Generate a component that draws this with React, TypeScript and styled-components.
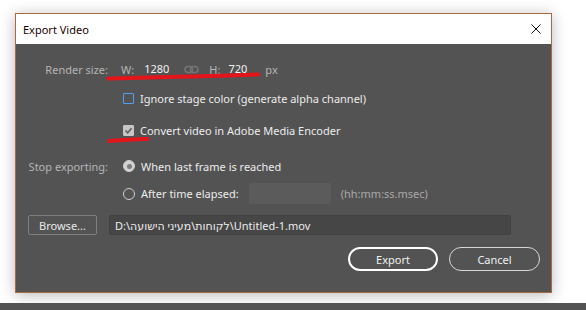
import React from 'react'
import styled, { createGlobalStyle } from 'styled-components'

const GlobalStyle = createGlobalStyle`
  html, body {
    margin: 0;
    background: #ffffff;
  }
  body {
    font-family: "Noto Sans", "DejaVu Sans", sans-serif;
    font-size: 11px;
  }
`

const Page = styled.div`
  position: relative;
  width: 586px;
  height: 310px;
  overflow: hidden;
  box-sizing: border-box;
  padding-top: 13px;
  display: flex;
  flex-direction: column;
`

const Dialog = styled.div`
  margin-left: 15px;
  width: 537px;
  box-sizing: border-box;
  border: 1px solid #a86a3e;
  background: #535353;
  box-shadow: 0 2px 14px rgba(0, 0, 0, 0.28);
`

const TitleBar = styled.div`
  height: 30px;
  background: #ffffff;
  display: flex;
  align-items: center;
  justify-content: space-between;
  padding: 0 10px 0 7px;
  color: #1a0000;
  font-size: 11px;
`

const Body = styled.div`
  padding: 15px 0 21px 0;
  display: flex;
  flex-direction: column;
`

const Row = styled.div<{ $top: number; $h?: number }>`
  margin-top: ${p => p.$top}px;
  height: ${p => p.$h ?? 20}px;
  display: grid;
  grid-template-columns: 80px 1fr;
  column-gap: 15px;
  padding-left: 12px;
  align-items: center;
`

const Label = styled.span`
  color: #b5b5b5;
  text-align: right;
  white-space: nowrap;
`

const Controls = styled.div`
  display: flex;
  align-items: center;
  color: #ececec;
  white-space: nowrap;
`

const Dim = styled.span<{ $ml?: number }>`
  color: #b5b5b5;
  margin-left: ${p => p.$ml ?? 0}px;
`

const Value = styled.span<{ $ml?: number }>`
  color: #f2f2f2;
  margin-left: ${p => p.$ml ?? 0}px;
  border-bottom: 1px dotted #d8c8a8;
  line-height: 14px;
`

const LinkIcon = styled.svg`
  margin-left: 15px;
  width: 15px;
  height: 9px;
`

const Box = styled.span<{ $checked?: boolean }>`
  width: 11px;
  height: 11px;
  box-sizing: border-box;
  border-radius: 1px;
  border: 1px solid ${p => (p.$checked ? '#c6c6c6' : '#55a0ee')};
  background: ${p => (p.$checked ? '#c6c6c6' : 'transparent')};
  display: flex;
  align-items: center;
  justify-content: center;
  margin-right: 6px;
`

const Radio = styled.span<{ $on?: boolean }>`
  width: 12px;
  height: 12px;
  box-sizing: border-box;
  border-radius: 50%;
  border: 1px solid #cfcfcf;
  background: ${p => (p.$on ? '#d2d2d2' : 'transparent')};
  display: flex;
  align-items: center;
  justify-content: center;
  margin-right: 6px;

  &::after {
    content: '';
    display: ${p => (p.$on ? 'block' : 'none')};
    width: 5px;
    height: 5px;
    border-radius: 50%;
    background: #7c7c7c;
  }
`

const TimeField = styled.div`
  width: 82px;
  height: 21px;
  margin-left: 10px;
  background: #5b5b5b;
  border-radius: 2px;
`

const FileRow = styled.div`
  margin-top: 11px;
  height: 20px;
  display: flex;
  align-items: center;
  gap: 12px;
  padding-left: 12px;
`

const BrowseButton = styled.div`
  width: 69px;
  height: 20px;
  box-sizing: border-box;
  border: 1px solid #7e7e7e;
  border-radius: 2px;
  color: #e8e8e8;
  display: flex;
  align-items: center;
  justify-content: center;
`

const PathField = styled.div`
  width: 402px;
  height: 20px;
  box-sizing: border-box;
  background: #464646;
  border: 1px solid #424242;
  border-radius: 2px;
  color: #ececec;
  display: flex;
  align-items: center;
  padding-left: 5px;
  white-space: nowrap;
`

const Actions = styled.div`
  margin-top: 12px;
  height: 24px;
  display: flex;
  justify-content: flex-end;
  gap: 11px;
  padding-right: 11px;
`

const PillButton = styled.div<{ $primary?: boolean }>`
  width: ${p => (p.$primary ? 90 : 91)}px;
  height: 24px;
  box-sizing: border-box;
  border-radius: 12px;
  border: ${p => (p.$primary ? '2px solid #ffffff' : '1px solid #d6d6d6')};
  color: #f0f0f0;
  display: flex;
  align-items: center;
  justify-content: center;
`

const BottomStrip = styled.div`
  margin-top: 10px;
  height: 8px;
  background: #535353;
`

const Marks = styled.svg`
  position: absolute;
  left: 0;
  top: 0;
  pointer-events: none;
`

export default function App() {
  return (
    <>
      <GlobalStyle />
      <Page>
        <Dialog>
          <TitleBar>
            <span>Export Video</span>
            <svg width="10" height="10" viewBox="0 0 10 10">
              <path d="M0.5 0.5 L9.5 9.5 M9.5 0.5 L0.5 9.5" stroke="#111" strokeWidth="1" />
            </svg>
          </TitleBar>
          <Body>
            <Row $top={0}>
              <Label>Render size:</Label>
              <Controls style={{ marginLeft: -2 }}>
                <Dim>W:</Dim>
                <Value $ml={10}>1280</Value>
                <LinkIcon viewBox="0 0 15 9">
                  <rect x="1" y="1.5" width="7.5" height="6" rx="3" fill="none" stroke="#747474" strokeWidth="1.6" />
                  <rect x="6.5" y="1.5" width="7.5" height="6" rx="3" fill="none" stroke="#747474" strokeWidth="1.6" />
                </LinkIcon>
                <Dim $ml={10}>H:</Dim>
                <Value $ml={8}>720</Value>
                <Dim $ml={18}>px</Dim>
              </Controls>
            </Row>
            <Row $top={9}>
              <span />
              <Controls>
                <Box />
                Ignore stage color (generate alpha channel)
              </Controls>
            </Row>
            <Row $top={12}>
              <span />
              <Controls>
                <Box $checked>
                  <svg width="9" height="9" viewBox="0 0 9 9">
                    <path d="M1.5 4.6 L3.6 6.8 L7.6 2.2" fill="none" stroke="#5c5c5c" strokeWidth="1.5" />
                  </svg>
                </Box>
                Convert video in Adobe Media Encoder
              </Controls>
            </Row>
            <Row $top={16}>
              <Label>Stop exporting:</Label>
              <Controls>
                <Radio $on />
                When last frame is reached
              </Controls>
            </Row>
            <Row $top={7} $h={21}>
              <span />
              <Controls>
                <Radio />
                After time elapsed:
                <TimeField />
                <Dim $ml={10} style={{ color: '#a9a9a9' }}>(hh:mm:ss.msec)</Dim>
              </Controls>
            </Row>
            <FileRow>
              <BrowseButton>Browse...</BrowseButton>
              <PathField>D:\לקוחות\מעיני הישועה\Untitled-1.mov</PathField>
            </FileRow>
            <Actions>
              <PillButton $primary>Export</PillButton>
              <PillButton>Cancel</PillButton>
            </Actions>
          </Body>
        </Dialog>
        <BottomStrip />
        <Marks width="586" height="310" viewBox="0 0 586 310">
          <path d="M108 78.5 C150 77.5 210 76.5 258 74.5" stroke="#e4141b" strokeWidth="4" fill="none" strokeLinecap="round" />
          <path d="M109 141 C122 140 135 139.5 147 139" stroke="#e4141b" strokeWidth="4" fill="none" strokeLinecap="round" />
        </Marks>
      </Page>
    </>
  )
}
